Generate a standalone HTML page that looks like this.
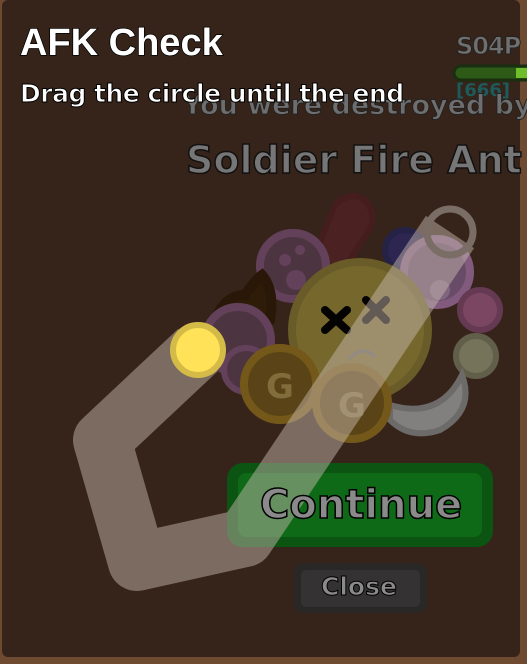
<!DOCTYPE html>
<html><head><style>
html,body{margin:0;padding:0;background:#36241a;width:527px;height:664px;overflow:hidden}
.t{position:absolute;font-family:"DejaVu Sans","Liberation Sans",sans-serif;font-weight:bold;white-space:nowrap}
</style></head><body>
<svg width="527" height="664" style="position:absolute;left:0;top:0">
<rect width="527" height="664" fill="#6e4a30"/>
<rect x="2" y="0" width="518" height="657" rx="6" fill="#36241a"/>
<g opacity="0.9">
<path d="M335 205 Q350 190 365 200 Q378 215 368 232 L340 275 L315 255 Z" fill="#4e2222" stroke="#461d1d" stroke-width="6"/>
<circle cx="293" cy="266" r="33" fill="#4f3645" stroke="#6a4561" stroke-width="8"/>
<circle cx="285" cy="260" r="6" fill="#6a4561"/><circle cx="300" cy="250" r="5" fill="#6a4561"/><circle cx="296" cy="280" r="10" fill="#6a4561"/>
<circle cx="405" cy="250" r="20" fill="#2b2758" stroke="#25224b" stroke-width="6"/>
<circle cx="437" cy="272" r="33" fill="#6e5170" stroke="#8a6088" stroke-width="8"/>
<circle cx="440" cy="290" r="10" fill="#8a6d8a"/>
<circle cx="480" cy="310" r="20" fill="#824a6a" stroke="#6a3c58" stroke-width="6"/>
<path d="M215 320 Q225 295 245 295 Q255 280 262 275 Q275 290 270 320 L230 335 Z" fill="#2e1c08" stroke="#281705" stroke-width="10"/>
<circle cx="238" cy="340" r="33" fill="#4f3645" stroke="#6a4561" stroke-width="8"/>
<circle cx="246" cy="370" r="22" fill="#4f3645" stroke="#6a4561" stroke-width="6"/>
<circle cx="476" cy="356" r="20" fill="#7c7c62" stroke="#66654f" stroke-width="6"/>
<path d="M390 405 Q440 420 462 375 Q475 410 440 430 Q410 440 390 420 Z" fill="#8a8a8a" stroke="#737373" stroke-width="6"/>
<circle cx="360" cy="330" r="68" fill="#7d7030" stroke="#6f632a" stroke-width="8"/>
<g stroke="#000" stroke-width="8" stroke-linecap="round"><path d="M325 310 L347 330 M347 310 L325 330 M366 300 L386 320 M386 300 L366 320"/></g>
<path d="M350 358 Q362 345 374 356" fill="none" stroke="#666" stroke-width="3" stroke-linecap="round"/>
<circle cx="280" cy="384" r="36" fill="#5e4716" stroke="#7b5e1a" stroke-width="8"/>
<text x="280" y="398" font-family="DejaVu Sans" font-weight="bold" font-size="34" fill="#8a7440" text-anchor="middle">G</text>
<circle cx="352" cy="403" r="36" fill="#5e4716" stroke="#7b5e1a" stroke-width="8"/>
<text x="352" y="417" font-family="DejaVu Sans" font-weight="bold" font-size="34" fill="#8a7440" text-anchor="middle">G</text>
</g>
<rect x="227" y="463" width="266" height="84" rx="16" fill="#0b5412"/>
<rect x="238" y="473" width="244" height="64" rx="8" fill="#0f6a18"/>
<rect x="294" y="563" width="133" height="50" rx="10" fill="#2a2826"/>
<rect x="301" y="570" width="119" height="37" rx="5" fill="#343232"/>
<polyline points="198,350 102,440 137,562 245,538 450,232" fill="none" stroke="rgba(200,185,175,0.48)" stroke-width="58" stroke-linejoin="round"/>
<circle cx="450" cy="232" r="23" fill="none" stroke="#7a6d66" stroke-width="7"/>
<circle cx="198" cy="350" r="25" fill="#ffe258" stroke="#d4bb48" stroke-width="6"/>
<rect x="454" y="66" width="80" height="14" rx="7" fill="#2e5a18" stroke="#1a2e10" stroke-width="3"/>
<rect x="516" y="68" width="20" height="10" fill="#6fbf2c"/>
</svg>
<div class="t" style="left:20px;top:22px;font-size:38px;color:#fff;font-family:'Liberation Sans',sans-serif;-webkit-text-stroke:1.5px #000;paint-order:stroke">AFK Check</div>
<div class="t" style="left:456px;top:32px;font-size:24px;color:#6f6f6f;-webkit-text-stroke:1px #222;letter-spacing:-1px">S04P</div>
<div class="t" style="left:456px;top:80px;font-size:18px;color:#1d5a5a">[666]</div>
<div class="t" style="left:183px;top:90px;font-size:27px;color:#6e6e6e;-webkit-text-stroke:1px #222">You were destroyed by</div>
<div class="t" style="left:20px;top:79px;font-size:25px;color:#fff;-webkit-text-stroke:1px #000;letter-spacing:-0.5px">Drag the circle until the end</div>
<div class="t" style="left:186px;top:138px;font-size:38px;color:#767676;-webkit-text-stroke:1.5px #111">Soldier Fire Ant</div>
<div class="t" style="left:260px;top:482px;font-size:40px;color:#8a8a8a;-webkit-text-stroke:1.5px #000">Continue</div>
<div class="t" style="left:321px;top:572px;font-size:25px;color:#8a8a8a;-webkit-text-stroke:1px #000">Close</div>
</body></html>
